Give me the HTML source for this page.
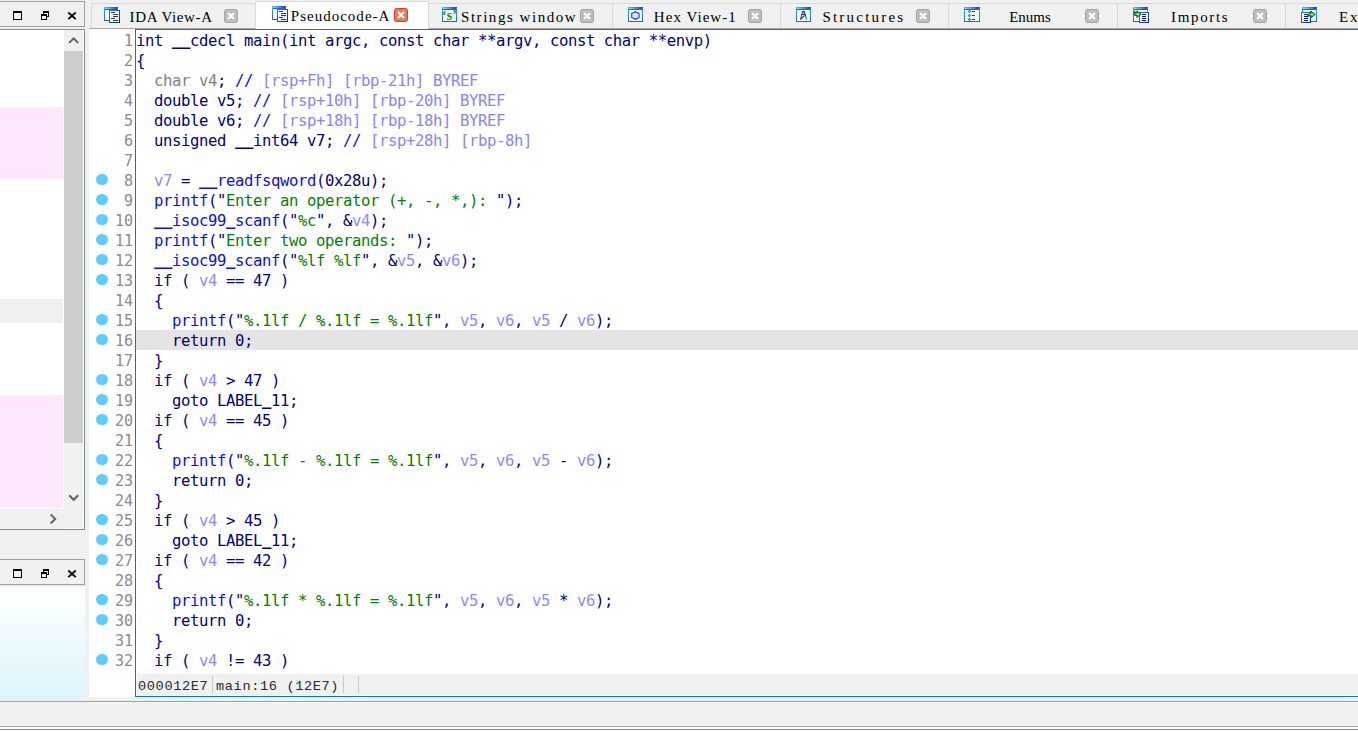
<!DOCTYPE html>
<html lang="en">
<head>
<meta charset="utf-8">
<title>IDA - Pseudocode-A</title>
<style>
html,body{margin:0;padding:0;overflow:hidden;background:#f0f0f0}
body{width:1358px;height:731px}
#root{position:relative;width:1358px;height:731px;overflow:hidden;background:#f0f0f0;font-family:"Liberation Sans",sans-serif}
.abs{position:absolute}
/* left dock headers */
.dockhdr{position:absolute;left:-1px;width:86px;height:26px;box-sizing:border-box;border:1px solid #a0a0a0;background:#f0f0f0}
.dockhdr svg{position:absolute;left:-1px;top:-1px}
/* left panel 1 */
#lp1{position:absolute;left:-1px;top:29px;width:86px;height:501px;box-sizing:border-box;border:1px solid #828790;background:#fff}
#lp1 .pink{position:absolute;left:0;width:63px;background:#ffe8ff}
#lp1 .gry{position:absolute;left:0;width:63px;background:#f0f0f0}
#vsb{position:absolute;left:64px;top:0;width:19px;height:498px;background:#f0f0f0}
#vsb .thumb{position:absolute;left:0;top:21px;width:19px;height:392px;background:#cdcdcd}
#hsb{position:absolute;left:0;top:479px;width:64px;height:20px;background:#f0f0f0}
/* left panel 2 */
#lp2{position:absolute;left:0;top:587px;width:85px;height:110px;background:linear-gradient(#ffffff,#dcf5fd)}
/* tab bar */
.tab{position:absolute;top:3px;height:25px;box-sizing:border-box;border-top:1px solid #d9d9d9;border-left:1px solid #d9d9d9;background:#f0f0f0}
.tab.act{top:1px;height:28px;background:#fff;border-right:1px solid #d9d9d9}
.tt{position:absolute;height:20px;line-height:20px;font-family:"Liberation Serif",serif;font-size:15px;color:#000;white-space:pre}
.ic{position:absolute}
.cx{position:absolute;width:14px;height:14px;box-sizing:border-box;border:1px solid #a3a3a3;border-radius:2.5px;background:#bdbdbd}
.cx.r{border-color:#d8392b;background:#e37f58}
.cx svg{position:absolute;left:0;top:0}
#tabline{position:absolute;left:89px;top:28px;width:1269px;height:1px;background:#a9a9a9}
/* gutter */
#gutter{position:absolute;left:89px;top:29px;width:46px;height:668px;background:#fff}
#nums{position:absolute;left:89px;top:31px;width:44px;text-align:right;font:15.1px/20px "DejaVu Sans Mono","Liberation Mono",monospace;letter-spacing:-0.09px;color:#8a8a8a}
#nums div{height:20px}
.dot{position:absolute;left:96.200px;width:11.600px;height:11.600px;border-radius:50%;background:#5fcefe}
/* code view */
#cv{position:absolute;left:135px;top:29px;width:1225px;height:668px;box-sizing:border-box;border:1px solid #0078d7;background:#fff}
#code{position:absolute;left:0;top:0;width:1223px;font:15.6px/22px "DejaVu Sans Mono","Liberation Mono",monospace;letter-spacing:-0.391px;color:#000080}
#code div{height:20px;padding-left:0;white-space:pre}
#code .hl{background:#e4e4e4}
#code u{text-decoration:none;position:relative;top:-1.5px;font-weight:bold}
.b{color:#0c0cee}.g{color:#008000}.v{color:#8c8cf0}.y{color:#808080}.c{color:#8585fb}
#st{position:absolute;left:1px;top:644px;width:1222px;height:21px;background:#f0f0f0;font:13.6px/21px "Liberation Mono",monospace;letter-spacing:0.64px;color:#2a2a2a;white-space:pre}
#st span{position:absolute;top:2px}
#st i{position:absolute;top:2px;width:1px;height:17px;background:#c8c8c8}
.hline{position:absolute;left:0;width:1358px;height:1px}
</style>
</head>
<body>
<div id="root">

<!-- left dock header 1 -->
<div class="dockhdr" style="top:1px"><svg width="86" height="26"><g fill="none" stroke="#000" stroke-width="1" shape-rendering="crispEdges"><path d="M14.500 10.500h8v8h-8zM14.500 11.500h8"/><path d="M44.500 10.500h5v5h-5zM44.500 11.500h5"/><path d="M42.500 13.500h5v5h-5z" fill="#f0f0f0"/><path d="M42.500 14.500h5"/></g><path d="M69.300 11.500l7.400 6.700M76.700 11.500l-7.400 6.700" stroke="#000" stroke-width="1.700" fill="none"/></svg></div>

<!-- left panel 1 -->
<div id="lp1">
<div class="pink" style="top:77px;height:72px"></div>
<div class="gry" style="top:269px;height:24px"></div>
<div class="pink" style="top:365px;height:113px"></div>
<div id="vsb"><div class="thumb"></div>
<svg class="abs" style="left:0;top:0" width="19" height="498"><g fill="none" stroke="#606060" stroke-width="2"><path d="M5.100 12.900l4.500-4.500 4.500 4.500"/><path d="M5.200 465.300l4.500 4.500 4.500-4.500"/></g></svg>
</div>
<div id="hsb"><svg class="abs" style="left:0;top:0" width="64" height="20"><path d="M50.700 5.400l4.500 4.500-4.500 4.500" fill="none" stroke="#606060" stroke-width="2"/></svg></div>
</div>

<!-- left dock header 2 -->
<div class="dockhdr" style="top:559px"><svg width="86" height="26"><g fill="none" stroke="#000" stroke-width="1" shape-rendering="crispEdges"><path d="M14.500 10.500h8v8h-8zM14.500 11.500h8"/><path d="M44.500 10.500h5v5h-5zM44.500 11.500h5"/><path d="M42.500 13.500h5v5h-5z" fill="#f0f0f0"/><path d="M42.500 14.500h5"/></g><path d="M69.300 11.500l7.400 6.700M76.700 11.500l-7.400 6.700" stroke="#000" stroke-width="1.700" fill="none"/></svg></div>

<div id="lp2"></div>

<!-- tabs -->
<div class="tab" style="left:91px;width:164px"></div>
<div class="tab" style="left:428px;width:184px"></div>
<div class="tab" style="left:612px;width:168px"></div>
<div class="tab" style="left:780px;width:168px"></div>
<div class="tab" style="left:948px;width:169px"></div>
<div class="tab" style="left:1117px;width:168px"></div>
<div class="tab" style="left:1285px;width:168px"></div>
<div id="tabline"></div>
<div class="tab act" style="left:255px;width:174px"></div>
<span class="tt" style="left:129.6px;top:7px;letter-spacing:0.627px">IDA View-A</span>
<span class="tt" style="left:290.8px;top:6px;letter-spacing:1.010px">Pseudocode-A</span>
<span class="tt" style="left:461.0px;top:7px;letter-spacing:1.543px">Strings window</span>
<span class="tt" style="left:653.8px;top:7px;letter-spacing:1.045px">Hex View-1</span>
<span class="tt" style="left:822.4px;top:7px;letter-spacing:2.218px">Structures</span>
<span class="tt" style="left:1009.2px;top:7px;letter-spacing:-0.035px">Enums</span>
<span class="tt" style="left:1171.1px;top:7px;letter-spacing:1.633px">Imports</span>
<span class="tt" style="left:1339.1px;top:7px;letter-spacing:1.633px">Exports</span>
<svg width="0" height="0" style="position:absolute">
<defs>
<linearGradient id="tb" x1="0" y1="0" x2="1" y2="0"><stop offset="0" stop-color="#3fd2ff"/><stop offset="1" stop-color="#2a36d2"/></linearGradient>
<linearGradient id="tb2" x1="0" y1="0" x2="1" y2="0"><stop offset="0" stop-color="#7af0ff"/><stop offset=".7" stop-color="#3a78e6"/><stop offset="1" stop-color="#3a22d8"/></linearGradient>
<linearGradient id="wb" x1="0" y1="0" x2="0" y2="1"><stop offset="0" stop-color="#2fa6f6"/><stop offset="1" stop-color="#2b62d0"/></linearGradient>
<linearGradient id="wi" x1="0" y1="0" x2="1" y2="1"><stop offset="0" stop-color="#ffffff"/><stop offset="1" stop-color="#dffcff"/></linearGradient>
<linearGradient id="db" x1="0" y1="0" x2="1" y2="1"><stop offset="0" stop-color="#3c78b8"/><stop offset="1" stop-color="#0b2f6a"/></linearGradient>
<linearGradient id="di" x1="0" y1="0" x2="1" y2="1"><stop offset="0" stop-color="#ffffff"/><stop offset="1" stop-color="#d4e6ff"/></linearGradient>
<radialGradient id="ga" cx=".55" cy=".5" r=".6"><stop offset="0" stop-color="#9dffb0"/><stop offset=".5" stop-color="#22d322"/><stop offset="1" stop-color="#0a6a14"/></radialGradient>
<g id="win15"><rect x=".5" y=".5" width="14" height="14" fill="url(#wi)" stroke="url(#wb)"/><rect x="0" y="0" width="15" height="1" fill="url(#tb)"/><rect x="1" y="1" width="13" height="1" fill="url(#tb2)"/><rect x="1" y="2" width="14" height="1" fill="#2b5bd6"/></g>
<g id="win14"><rect x=".5" y=".5" width="13" height="13" fill="url(#wi)" stroke="url(#wb)"/><rect x="0" y="0" width="14" height="1" fill="url(#tb)"/><rect x="1" y="1" width="12" height="1" fill="url(#tb2)"/><rect x="1" y="2" width="13" height="1" fill="#2b5bd6"/></g>
<g id="win16"><rect x=".5" y=".5" width="15" height="14" fill="url(#wi)" stroke="url(#wb)"/><rect x="0" y="0" width="16" height="1" fill="url(#tb)"/><rect x="1" y="1" width="14" height="1" fill="url(#tb2)"/><rect x="1" y="2" width="15" height="1" fill="#2b5bd6"/></g>
<g id="docview"><use href="#win14"/><rect x="5.5" y="3.5" width="10" height="12" fill="url(#di)" stroke="url(#db)"/><path d="M7 5.5h4M9 7.5h5M9 9.5h5M7 11.5h4M9 13.5h5" stroke="#3a3a3a" stroke-width="1" fill="none"/></g>
<g id="xw"><path d="M4 4l6 6M10 4l-6 6" stroke="#fff" stroke-width="2" fill="none"/></g>
</defs>
</svg>
<!-- tab icons -->
<svg class="ic" style="left:104px;top:7px" width="17" height="17"><use href="#docview"/></svg>
<svg class="ic" style="left:272px;top:6px" width="17" height="17"><use href="#docview"/></svg>
<svg class="ic" style="left:442px;top:7px" width="16" height="16"><use href="#win15"/><text x="7.5" y="13" text-anchor="middle" font-family="Liberation Serif,serif" font-weight="bold" font-size="14" fill="#2a8a0a">‘s’</text></svg>
<svg class="ic" style="left:628px;top:7px" width="16" height="16"><use href="#win15"/><path d="M7.400 4.700L11.100 6.500v4L7.400 12.300 3.700 10.500v-4z" fill="#dbe6ff" stroke="#2b2bff" stroke-width="1.100"/></svg>
<svg class="ic" style="left:796px;top:7px" width="16" height="16"><use href="#win15"/><g fill="none" stroke="#1b3c74" stroke-width="1"><path d="M6.300 4.500h2.400v1.300h-2.400zM6.200 5.800L4.500 12.600M8.800 5.800l1.700 6.800M5.700 7.500h3.600"/><path d="M4.600 12.300l4-3.900" stroke-width="1.200"/></g></svg>
<svg class="ic" style="left:964px;top:7px" width="17" height="16"><use href="#win16"/><g fill="#00e5ff" stroke="#1634a8" stroke-width=".8"><path d="M5.500 3.200l1.300 1.300-1.300 1.300-1.300-1.300z"/><path d="M5.500 7.200l1.300 1.300-1.300 1.300-1.300-1.300z"/><path d="M5.500 11.200l1.300 1.300-1.300 1.300-1.300-1.300z"/></g><path d="M8 4.500h3M8 8.500h3M8 12.500h3" stroke="#1a45c4" stroke-width="1"/></svg>
<svg class="ic" style="left:1132px;top:7px" width="18" height="17"><g transform="translate(1,0)"><use href="#win15"/></g><rect x="7.5" y="5.5" width="9" height="10" fill="url(#di)" stroke="url(#db)"/><path d="M10 7.5h4M10 9.5h4M10 11.5h4M10 13.5h4" stroke="#1212a8" stroke-width="1.1"/><path d="M2 4.5l3.2 1.3-.4-2 4.4 3.4-4.4 3.4.3-2.2-2.3.2z" fill="url(#ga)" stroke="#0b4d12" stroke-width=".9" stroke-linejoin="round"/></svg>
<svg class="ic" style="left:1300px;top:7px" width="18" height="17"><g transform="translate(2,0)"><use href="#win15"/></g><rect x="1.5" y="5.5" width="9" height="10" fill="url(#di)" stroke="url(#db)"/><path d="M4 7.5h4M4 9.5h4M4 11.5h4M4 13.5h4" stroke="#1212a8" stroke-width="1.1"/><path d="M7.5 10.2c.2-2.6 1.4-3.9 3.5-4.1l-.2-2 4.4 3.2-4 3.4-.1-2.1c-1.500-.1-2.600.4-3.600 1.600z" fill="url(#ga)" stroke="#0b4d12" stroke-width=".9" stroke-linejoin="round"/></svg>
<!-- tab close buttons -->
<div class="cx" style="left:224px;top:9px"><svg width="14" height="14" viewBox="1 1 14 14" style="left:-1px;top:-1px"><use href="#xw" transform="translate(1,1)"/></svg></div>
<div class="cx r" style="left:394px;top:8px"><svg width="14" height="14" viewBox="1 1 14 14" style="left:-1px;top:-1px"><use href="#xw" transform="translate(1,1)"/></svg></div>
<div class="cx" style="left:580px;top:9px"><svg width="14" height="14" viewBox="1 1 14 14" style="left:-1px;top:-1px"><use href="#xw" transform="translate(1,1)"/></svg></div>
<div class="cx" style="left:748px;top:9px"><svg width="14" height="14" viewBox="1 1 14 14" style="left:-1px;top:-1px"><use href="#xw" transform="translate(1,1)"/></svg></div>
<div class="cx" style="left:916px;top:9px"><svg width="14" height="14" viewBox="1 1 14 14" style="left:-1px;top:-1px"><use href="#xw" transform="translate(1,1)"/></svg></div>
<div class="cx" style="left:1085px;top:9px"><svg width="14" height="14" viewBox="1 1 14 14" style="left:-1px;top:-1px"><use href="#xw" transform="translate(1,1)"/></svg></div>
<div class="cx" style="left:1253px;top:9px"><svg width="14" height="14" viewBox="1 1 14 14" style="left:-1px;top:-1px"><use href="#xw" transform="translate(1,1)"/></svg></div>

<!-- gutter -->
<div id="gutter"></div>
<div id="nums">
<div>1</div>
<div>2</div>
<div>3</div>
<div>4</div>
<div>5</div>
<div>6</div>
<div>7</div>
<div>8</div>
<div>9</div>
<div>10</div>
<div>11</div>
<div>12</div>
<div>13</div>
<div>14</div>
<div>15</div>
<div>16</div>
<div>17</div>
<div>18</div>
<div>19</div>
<div>20</div>
<div>21</div>
<div>22</div>
<div>23</div>
<div>24</div>
<div>25</div>
<div>26</div>
<div>27</div>
<div>28</div>
<div>29</div>
<div>30</div>
<div>31</div>
<div>32</div>
</div>
<i class="dot" style="top:173.7px"></i>
<i class="dot" style="top:193.7px"></i>
<i class="dot" style="top:213.7px"></i>
<i class="dot" style="top:233.7px"></i>
<i class="dot" style="top:253.7px"></i>
<i class="dot" style="top:273.7px"></i>
<i class="dot" style="top:313.7px"></i>
<i class="dot" style="top:333.7px"></i>
<i class="dot" style="top:373.7px"></i>
<i class="dot" style="top:393.7px"></i>
<i class="dot" style="top:413.7px"></i>
<i class="dot" style="top:453.7px"></i>
<i class="dot" style="top:473.7px"></i>
<i class="dot" style="top:513.7px"></i>
<i class="dot" style="top:533.7px"></i>
<i class="dot" style="top:553.7px"></i>
<i class="dot" style="top:593.7px"></i>
<i class="dot" style="top:613.7px"></i>
<i class="dot" style="top:653.7px"></i>

<!-- code view -->
<div id="cv">
<div id="code">
<div>int <u>__</u>cdecl main(int argc, const char **argv, const char **envp)</div>
<div>{</div>
<div><span class="y">  char v4</span>; <span class="b">//</span><span class="c"> [rsp+Fh] [rbp-21h] BYREF</span></div>
<div>  double v5; <span class="b">//</span><span class="c"> [rsp+10h] [rbp-20h] BYREF</span></div>
<div>  double v6; <span class="b">//</span><span class="c"> [rsp+18h] [rbp-18h] BYREF</span></div>
<div>  unsigned <u>__</u>int64 v7; <span class="b">//</span><span class="c"> [rsp+28h] [rbp-8h]</span></div>
<div>&nbsp;</div>
<div><span class="v">  v7</span> = <span class="b"><u>__</u>readfsqword</span>(0x28u);</div>
<div><span class="b">  printf</span>("<span class="g">Enter an operator (+, -, *,): </span>");</div>
<div><span class="b">  <u>__</u>isoc99<u>_</u>scanf</span>("<span class="g">%c</span>", &amp;<span class="v">v4</span>);</div>
<div><span class="b">  printf</span>("<span class="g">Enter two operands: </span>");</div>
<div><span class="b">  <u>__</u>isoc99<u>_</u>scanf</span>("<span class="g">%lf %lf</span>", &amp;<span class="v">v5</span>, &amp;<span class="v">v6</span>);</div>
<div>  if ( <span class="v">v4</span> == 47 )</div>
<div>  {</div>
<div><span class="b">    printf</span>("<span class="g">%.1lf / %.1lf = %.1lf</span>", <span class="v">v5</span>, <span class="v">v6</span>, <span class="v">v5</span> / <span class="v">v6</span>);</div>
<div class="hl">    return 0;</div>
<div>  }</div>
<div>  if ( <span class="v">v4</span> &gt; 47 )</div>
<div>    goto LABEL<u>_</u>11;</div>
<div>  if ( <span class="v">v4</span> == 45 )</div>
<div>  {</div>
<div><span class="b">    printf</span>("<span class="g">%.1lf - %.1lf = %.1lf</span>", <span class="v">v5</span>, <span class="v">v6</span>, <span class="v">v5</span> - <span class="v">v6</span>);</div>
<div>    return 0;</div>
<div>  }</div>
<div>  if ( <span class="v">v4</span> &gt; 45 )</div>
<div>    goto LABEL<u>_</u>11;</div>
<div>  if ( <span class="v">v4</span> == 42 )</div>
<div>  {</div>
<div><span class="b">    printf</span>("<span class="g">%.1lf * %.1lf = %.1lf</span>", <span class="v">v5</span>, <span class="v">v6</span>, <span class="v">v5</span> * <span class="v">v6</span>);</div>
<div>    return 0;</div>
<div>  }</div>
<div>  if ( <span class="v">v4</span> != 43 )</div>
</div>
<div id="st"><span style="left:1px">000012E7</span><i style="left:75px"></i><span style="left:79px">main:16 (12E7)</span><i style="left:206px"></i><i style="left:221px"></i></div>
</div>

<!-- bottom lines -->
<div class="hline" style="top:701px;background:#a0a0a0"></div>
<div class="hline" style="top:702px;background:#f6f6f6"></div>
<div class="hline" style="top:726px;background:#a0a0a0"></div>
<div class="hline" style="top:727px;height:2px;background:#fcfcfc"></div>
<div class="hline" style="top:729px;background:#828790"></div>
<div class="hline" style="top:730px;background:#fff"></div>

</div>
</body>
</html>
